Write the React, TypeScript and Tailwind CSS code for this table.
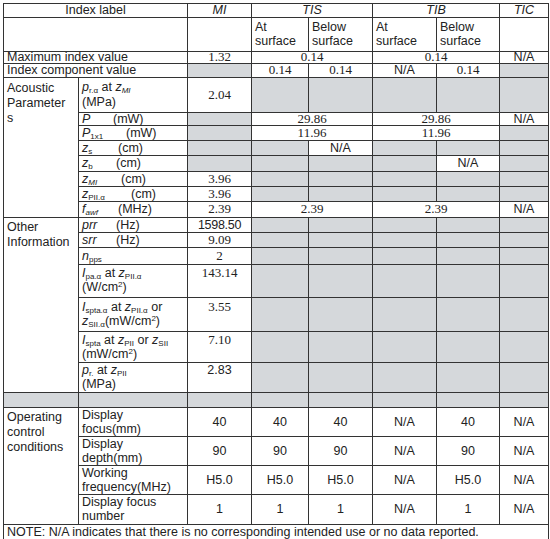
import type { ReactNode } from "react";

const sans = "font-['Liberation_Sans',Arial,sans-serif]";
const serif = "font-['Liberation_Serif','Times_New_Roman',serif]";
const line = "border border-[#333]";
const gray = "bg-[#d5d8db]";

type CellProps = {
    children?: ReactNode;
    colSpan?: number;
    rowSpan?: number;
    className?: string;
};

// plain value cell, centered
const V = ({ children, colSpan, className = "" }: CellProps) => (
    <td colSpan={colSpan} className={`${line} text-center align-middle px-[2px] py-0 ${className}`}>
        {children}
    </td>
);

// shaded empty cell
const G = ({ colSpan }: { colSpan?: number }) => <td colSpan={colSpan} className={`${line} ${gray} p-0`} />;

// row label in the second column
const L = ({ children, className = "align-top" }: CellProps) => (
    <td className={`${line} text-left px-[3px] py-0 ${className}`}>{children}</td>
);

const Sub = ({ children }: { children: ReactNode }) => (
    <sub className="text-[8px] leading-none not-italic font-normal">{children}</sub>
);

const Sup = ({ children }: { children: ReactNode }) => (
    <sup className="text-[8px] leading-none">{children}</sup>
);

const Num = ({ children }: { children: ReactNode }) => (
    <span className={`${serif} text-[13px] leading-[10px]`}>{children}</span>
);

// symbol followed by its unit at a fixed column
const Sym = ({ s, w, unit }: { s: ReactNode; w: string; unit: string }) => (
    <td className={`${line} text-left align-middle px-[3px] py-0`}>
        <span className="flex items-baseline leading-[11px]">
            <span className={`inline-block ${w}`}>{s}</span>
            <span>{unit}</span>
        </span>
    </td>
);

const Grays = () => (
    <>
        <G /><G /><G /><G /><G />
    </>
);

const App = () => {
    return (
        <div className={`w-[550px] h-[539px] bg-white pt-[3px] pl-[3px] text-[#222] ${sans} text-[12.5px] leading-[11px]`}>
            <table className="table-fixed border-collapse w-[545px]">
                <colgroup>
                    <col className="w-[75px]" />
                    <col className="w-[109px]" />
                    <col className="w-[64px]" />
                    <col className="w-[57px]" />
                    <col className="w-[64px]" />
                    <col className="w-[64px]" />
                    <col className="w-[63px]" />
                    <col className="w-[49px]" />
                </colgroup>
                <tbody>
                    {/* header */}
                    <tr className="h-[14px]">
                        <td colSpan={2} className={`${line} text-center p-0`}>Index label</td>
                        <V className="italic">MI</V>
                        <V colSpan={2} className="italic">TIS</V>
                        <V colSpan={2} className="italic">TIB</V>
                        <V className="italic">TIC</V>
                    </tr>
                    <tr className="h-[34px]">
                        <td colSpan={2} className={line} />
                        <td className={line} />
                        <td className={`${line} text-left align-top px-[3px] pt-[2px] leading-[14px]`}>At<br />surface</td>
                        <td className={`${line} text-left align-top px-[3px] pt-[2px] leading-[14px]`}>Below<br />surface</td>
                        <td className={`${line} text-left align-top px-[3px] pt-[2px] leading-[14px]`}>At<br />surface</td>
                        <td className={`${line} text-left align-top px-[3px] pt-[2px] leading-[14px]`}>Below<br />surface</td>
                        <td className={line} />
                    </tr>
                    <tr className="h-[12px]">
                        <td colSpan={2} className={`${line} px-[3px] py-0`}>Maximum index value</td>
                        <V><Num>1.32</Num></V>
                        <V colSpan={2}><Num>0.14</Num></V>
                        <V colSpan={2}><Num>0.14</Num></V>
                        <V>N/A</V>
                    </tr>
                    <tr className="h-[14px]">
                        <td colSpan={2} className={`${line} px-[3px] py-0`}>Index component value</td>
                        <G />
                        <V><Num>0.14</Num></V>
                        <V><Num>0.14</Num></V>
                        <V>N/A</V>
                        <V><Num>0.14</Num></V>
                        <G />
                    </tr>

                    {/* acoustic parameters */}
                    <tr className="h-[35px]">
                        <td rowSpan={8} className={`${line} align-top px-[3px] pt-[3px] leading-[15px]`}>
                            Acoustic<br />Parameter<br />s
                        </td>
                        <L className="align-top leading-[15px] pt-[2px]">
                            <i>p</i><Sub>r.α</Sub> at <i>z</i><Sub><i>MI</i></Sub><br />(MPa)
                        </L>
                        <V><Num>2.04</Num></V>
                        <Grays />
                    </tr>
                    <tr className="h-[13px]">
                        <Sym s={<i>P</i>} w="w-[31px]" unit="(mW)" />
                        <G />
                        <V colSpan={2}><Num>29.86</Num></V>
                        <V colSpan={2}><Num>29.86</Num></V>
                        <V>N/A</V>
                    </tr>
                    <tr className="h-[15px]">
                        <Sym s={<><i>P</i><Sub>1x1</Sub></>} w="w-[44px]" unit="(mW)" />
                        <G />
                        <V colSpan={2}><Num>11.96</Num></V>
                        <V colSpan={2}><Num>11.96</Num></V>
                        <G />
                    </tr>
                    <tr className="h-[15px]">
                        <Sym s={<><i>z</i><Sub>s</Sub></>} w="w-[36px]" unit="(cm)" />
                        <G /><G />
                        <V>N/A</V>
                        <G /><G /><G />
                    </tr>
                    <tr className="h-[16px]">
                        <Sym s={<><i>z</i><Sub>b</Sub></>} w="w-[34px]" unit="(cm)" />
                        <G /><G /><G /><G />
                        <V>N/A</V>
                        <G />
                    </tr>
                    <tr className="h-[15px]">
                        <Sym s={<><i>z</i><Sub><i>MI</i></Sub></>} w="w-[39px]" unit="(cm)" />
                        <V><Num>3.96</Num></V>
                        <Grays />
                    </tr>
                    <tr className="h-[15px]">
                        <Sym s={<><i>z</i><Sub>PII.α</Sub></>} w="w-[49px]" unit="(cm)" />
                        <V><Num>3.96</Num></V>
                        <Grays />
                    </tr>
                    <tr className="h-[16px]">
                        <Sym s={<><i>f</i><Sub><i>awf</i></Sub></>} w="w-[36px]" unit="(MHz)" />
                        <V><Num>2.39</Num></V>
                        <V colSpan={2}><Num>2.39</Num></V>
                        <V colSpan={2}><Num>2.39</Num></V>
                        <V>N/A</V>
                    </tr>

                    {/* other information */}
                    <tr className="h-[15px]">
                        <td rowSpan={7} className={`${line} align-top px-[3px] pt-[2px] leading-[15px]`}>
                            Other<br />Information
                        </td>
                        <Sym s={<i>prr</i>} w="w-[34px]" unit="(Hz)" />
                        <V className="tracking-[-0.3px]">1598.50</V>
                        <Grays />
                    </tr>
                    <tr className="h-[15px]">
                        <Sym s={<i>srr</i>} w="w-[34px]" unit="(Hz)" />
                        <V><Num>9.09</Num></V>
                        <Grays />
                    </tr>
                    <tr className="h-[17px]">
                        <L className="align-middle"><i>n</i><Sub>pps</Sub></L>
                        <V><Num>2</Num></V>
                        <Grays />
                    </tr>
                    <tr className="h-[33px]">
                        <L className="align-top leading-[14px] pt-[1px]">
                            <i>I</i><Sub>pa.α</Sub> at <i>z</i><Sub>PII.α</Sub><br />(W/cm<Sup>2</Sup>)
                        </L>
                        <V className="align-top pt-[3px]"><Num>143.14</Num></V>
                        <Grays />
                    </tr>
                    <tr className="h-[34px]">
                        <L className="align-top leading-[14px] pt-[2px]">
                            <i>I</i><Sub>spta.α</Sub> at <i>z</i><Sub>PII.α</Sub> or<br /><i>z</i><Sub>SII.α</Sub>(mW/cm<Sup>2</Sup>)
                        </L>
                        <V className="align-top pt-[4px]"><Num>3.55</Num></V>
                        <Grays />
                    </tr>
                    <tr className="h-[31px]">
                        <L className="align-top leading-[14px] pt-[1px]">
                            <i>I</i><Sub>spta</Sub> at <i>z</i><Sub>PII</Sub> or <i>z</i><Sub>SII</Sub><br />(mW/cm<Sup>2</Sup>)
                        </L>
                        <V className="align-top pt-[3px]"><Num>7.10</Num></V>
                        <Grays />
                    </tr>
                    <tr className="h-[30px]">
                        <L className="align-top leading-[14px]">
                            <i>p</i><Sub>r.</Sub> at <i>z</i><Sub>PII</Sub><br />(MPa)
                        </L>
                        <V className="align-top pt-[2px]">2.83</V>
                        <Grays />
                    </tr>

                    {/* blank shaded separator */}
                    <tr className="h-[15px]">
                        <G /><G /><G /><G /><G /><G /><G /><G />
                    </tr>

                    {/* operating conditions */}
                    <tr className="h-[29px]">
                        <td rowSpan={4} className={`${line} align-top px-[3px] pt-[2px] leading-[15px]`}>
                            Operating<br />control<br />conditions
                        </td>
                        <L className="align-top leading-[14px]">Display<br />focus(mm)</L>
                        <V>40</V><V>40</V><V>40</V><V>N/A</V><V>40</V><V>N/A</V>
                    </tr>
                    <tr className="h-[29px]">
                        <L className="align-top leading-[14px]">Display<br />depth(mm)</L>
                        <V>90</V><V>90</V><V>90</V><V>N/A</V><V>90</V><V>N/A</V>
                    </tr>
                    <tr className="h-[29px]">
                        <L className="align-top leading-[14px]">Working<br />frequency(MHz)</L>
                        <V>H5.0</V><V>H5.0</V><V>H5.0</V><V>N/A</V><V>H5.0</V><V>N/A</V>
                    </tr>
                    <tr className="h-[30px]">
                        <L className="align-top leading-[14px]">Display focus<br />number</L>
                        <V>1</V><V>1</V><V>1</V><V>N/A</V><V>1</V><V>N/A</V>
                    </tr>
                    <tr className="h-[16px]">
                        <td colSpan={8} className={`${line} px-[3px] py-0`}>
                            NOTE: N/A indicates that there is no corresponding intended use or no data reported.
                        </td>
                    </tr>
                </tbody>
            </table>
        </div>
    );
};

export default App;
